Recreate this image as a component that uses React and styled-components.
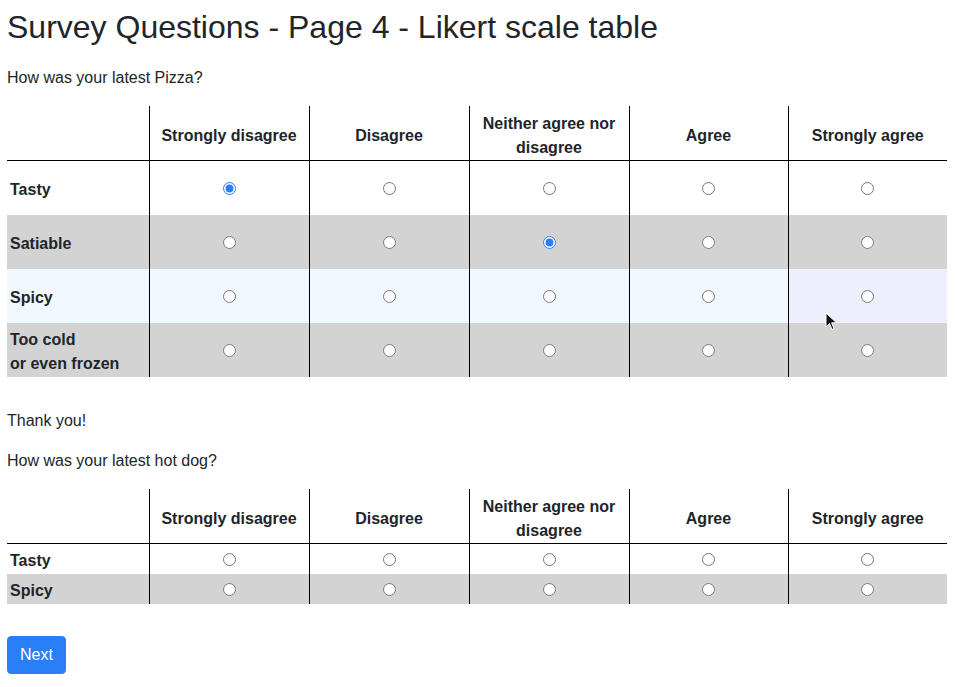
import React from "react";
import styled, { createGlobalStyle } from "styled-components";

const Global = createGlobalStyle`
  html, body { margin: 0; padding: 0; background: #fff; }
  body {
    font-family: "Liberation Sans", Arial, sans-serif;
    font-size: 16px;
    line-height: 1.5;
    color: #212529;
  }
`;

const Page = styled.div`
  position: relative;
  padding: 8px 10px 0 7px;
  width: 940px;
`;

const Title = styled.h1`
  margin: 0 0 20px;
  font-size: 32px;
  font-weight: 500;
  line-height: 1.2;
`;

const Question = styled.p`
  margin: 0 0 16px;
`;

const Note = styled.p`
  margin: 32px 0 16px;
`;

const Table = styled.table`
  width: 940px;
  border-collapse: collapse;
  table-layout: fixed;
  margin-bottom: 16px;
`;

const HeadCell = styled.th`
  height: 54px;
  padding: 6px 6px 0;
  box-sizing: border-box;
  font-weight: bold;
  text-align: center;
  vertical-align: middle;
  border-bottom: 1px solid #000;
  border-left: ${(p) => (p.$first ? "none" : "1px solid #000")};
`;

const Row = styled.tr`
  background: ${(p) => p.$bg || "transparent"};
`;

const Label = styled.th`
  height: ${(p) => p.$h}px;
  padding: 4px 3px 0;
  box-sizing: border-box;
  font-weight: bold;
  text-align: left;
  vertical-align: middle;
`;

const Cell = styled.td`
  height: ${(p) => p.$h}px;
  padding: 0;
  text-align: center;
  vertical-align: middle;
  border-left: 1px solid #000;
  background: ${(p) => (p.$hover ? "#edf0fc" : "transparent")};
`;

const Radio = styled.input.attrs({ type: "radio" })`
  margin: 0;
  width: 13px;
  height: 13px;
  vertical-align: middle;
  position: relative;
  top: -1px;
  accent-color: #2a7ef7;
`;

const Button = styled.button`
  font-family: "Liberation Sans", Arial, sans-serif;
  font-size: 16px;
  line-height: 24px;
  color: #fff;
  background: #2a7ff8;
  border: 1px solid #2a7ff8;
  border-radius: 4px;
  padding: 6px 12px;
  margin-top: 16px;
  cursor: pointer;
`;

const Cursor = styled.svg`
  position: absolute;
  left: 825px;
  top: 312px;
  pointer-events: none;
`;

const scale = [
  "Strongly disagree",
  "Disagree",
  "Neither agree nor disagree",
  "Agree",
  "Strongly agree",
];

function Likert({ name, rows, rowH }) {
  return (
    <Table>
      <colgroup>
        <col style={{ width: 142 }} />
        <col style={{ width: 160 }} />
        <col style={{ width: 160 }} />
        <col style={{ width: 160 }} />
        <col style={{ width: 159 }} />
        <col style={{ width: 159 }} />
      </colgroup>
      <thead>
        <tr>
          <HeadCell $first />
          {scale.map((s) => (
            <HeadCell key={s}>{s}</HeadCell>
          ))}
        </tr>
      </thead>
      <tbody>
        {rows.map((r, i) => (
          <Row key={i} $bg={r.bg}>
            <Label $h={rowH}>{r.label}</Label>
            {scale.map((s, j) => (
              <Cell key={s} $h={rowH} $hover={r.hover === j}>
                <Radio
                  name={`${name}-${i}`}
                  defaultChecked={r.checked === j}
                />
              </Cell>
            ))}
          </Row>
        ))}
      </tbody>
    </Table>
  );
}

export default function App() {
  return (
    <>
      <Global />
      <Page>
        <Title>Survey Questions - Page 4 - Likert scale table</Title>
        <Question>How was your latest Pizza?</Question>
        <Likert
          name="pizza"
          rowH={54}
          rows={[
            { label: "Tasty", checked: 0 },
            { label: "Satiable", checked: 2, bg: "#d3d3d3" },
            { label: "Spicy", bg: "#f0f8ff", hover: 4 },
            {
              label: (
                <>
                  Too cold
                  <br />
                  or even frozen
                </>
              ),
              bg: "#d3d3d3",
            },
          ]}
        />
        <Note>Thank you!</Note>
        <Question>How was your latest hot dog?</Question>
        <Likert
          name="hotdog"
          rowH={30}
          rows={[
            { label: "Tasty" },
            { label: "Spicy", bg: "#d3d3d3" },
          ]}
        />
        <Button>Next</Button>
        <Cursor width="13" height="20" viewBox="0 0 13 20">
          <path
            d="M1 1 L1 15 L4.5 11.5 L7 17.5 L9 16.6 L6.6 10.8 L11.5 10.8 Z"
            fill="#111"
            stroke="#fff"
            strokeWidth="1"
          />
        </Cursor>
      </Page>
    </>
  );
}
